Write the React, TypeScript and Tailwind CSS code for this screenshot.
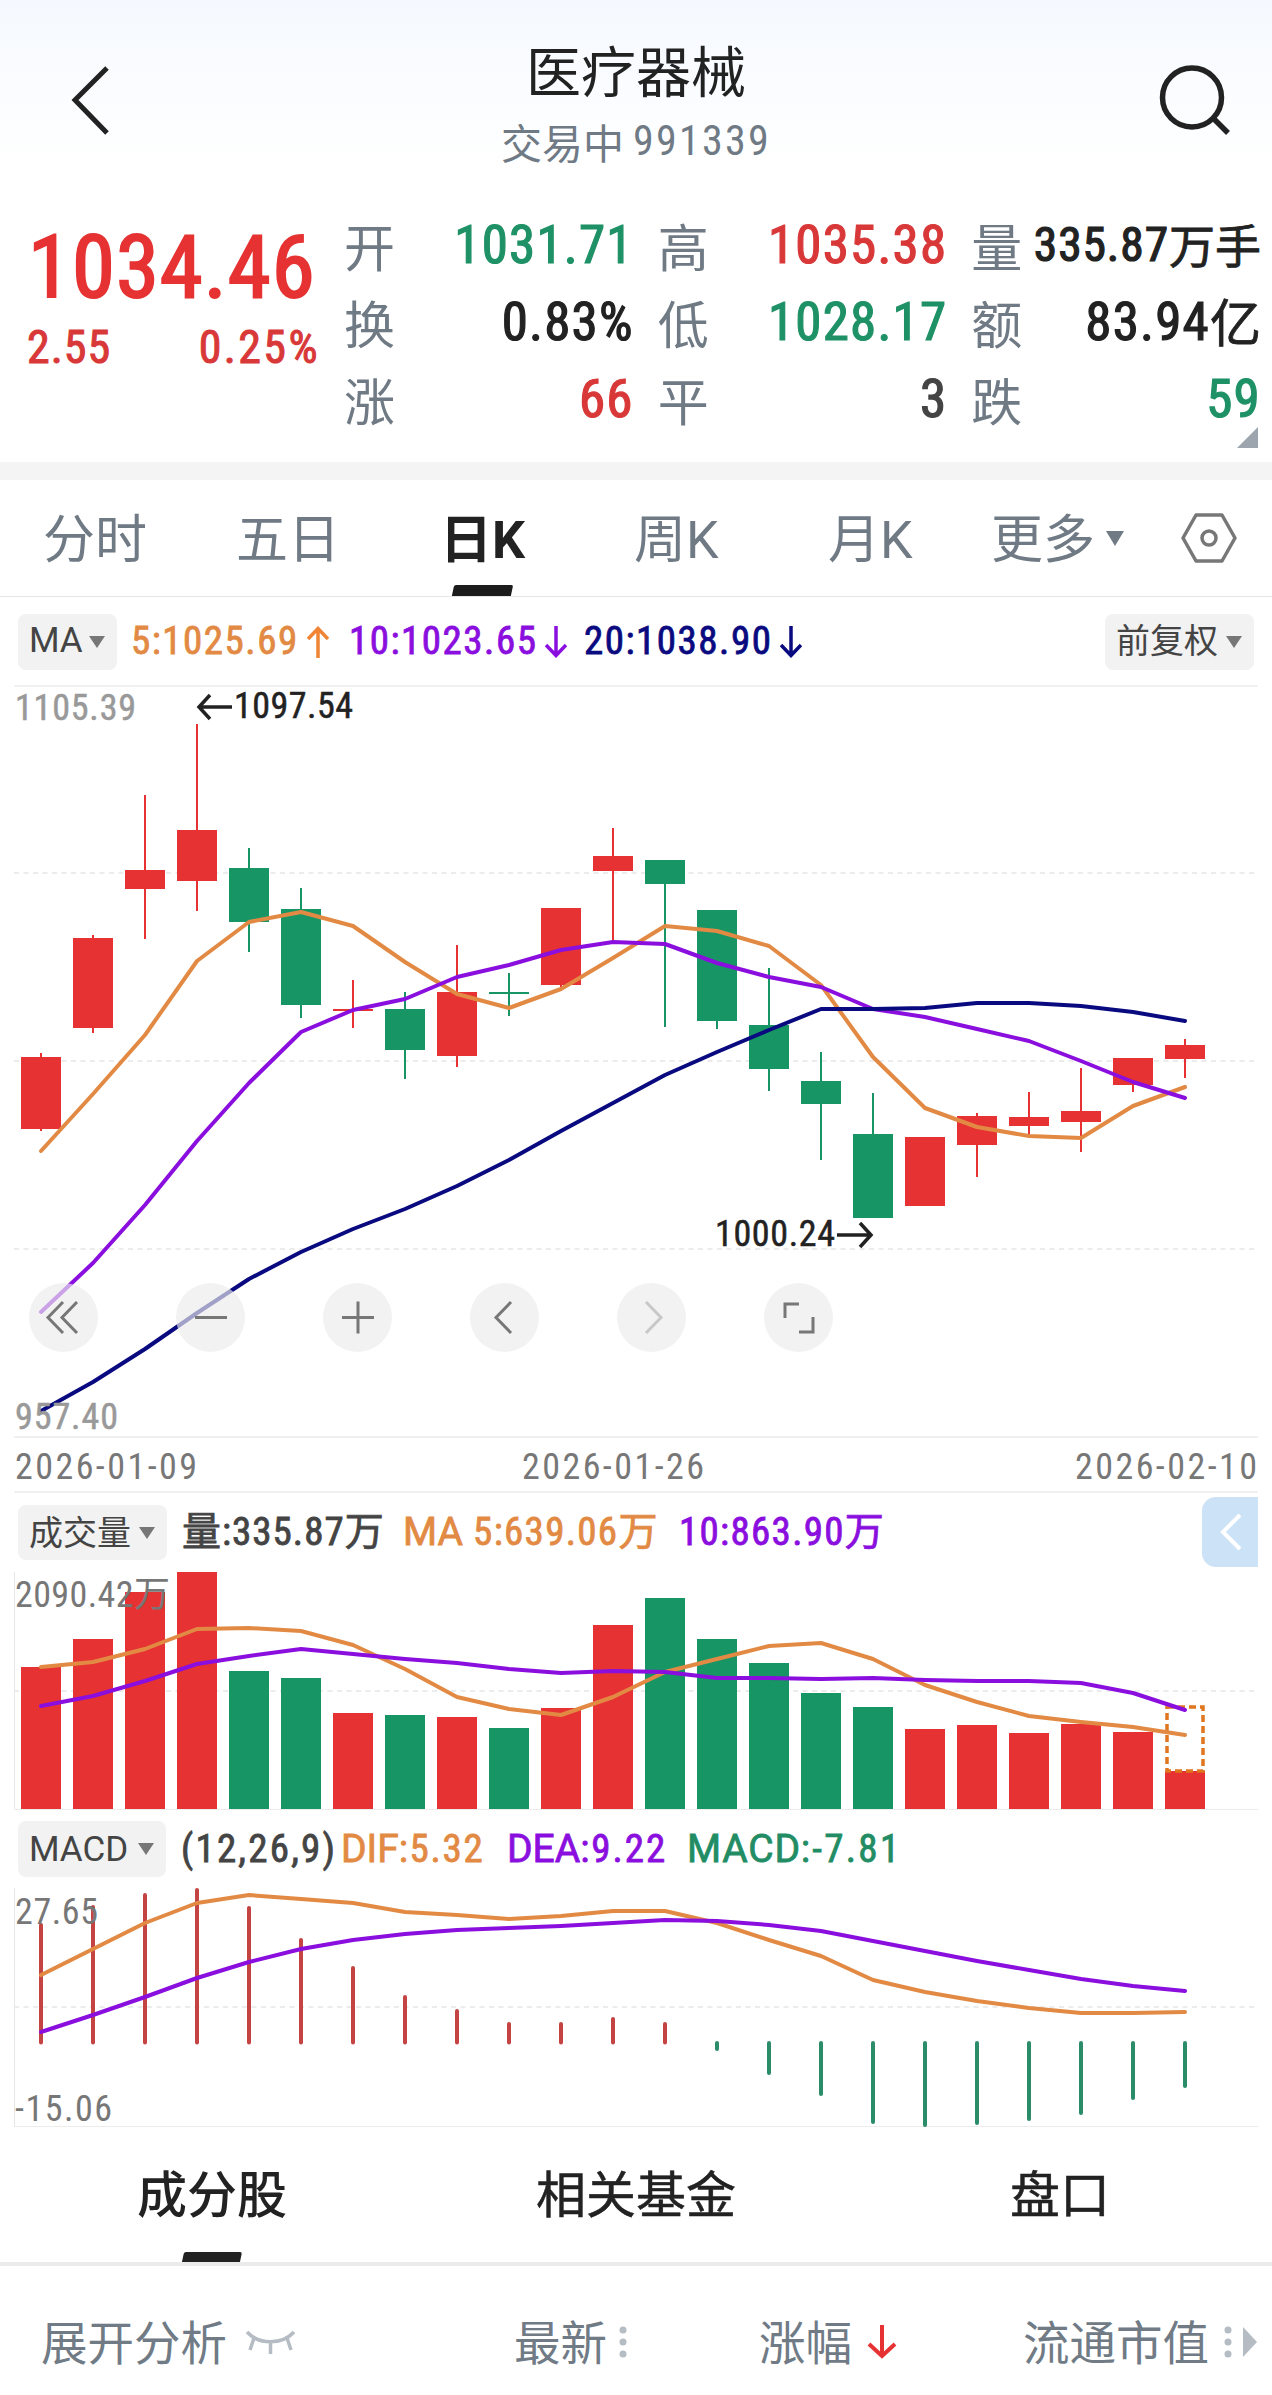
import type { ReactNode } from 'react';

type Candle = {
  up: boolean;
  high: number;
  top: number;
  bottom: number;
  low: number;
};

const RED = '#e63232';
const GREEN = '#189565';
const ORANGE = '#e28a44';
const PURPLE = '#8a0fde';
const NAVY = '#0a0a80';

const STEP = 52;
const FIRST_X = 41;

const c = (up: boolean, high: number, top: number, bottom: number, low: number): Candle => ({ up, high, top, bottom, low });

const candles: Candle[] = [
  c(true, 1053, 1057, 1129, 1131),
  c(true, 935, 938, 1028, 1033),
  c(true, 795, 870, 889, 939),
  c(true, 724, 830, 881, 911),
  c(false, 848, 868, 922, 952),
  c(false, 888, 909, 1005, 1018),
  c(true, 980, 1009, 1011, 1028),
  c(false, 992, 1009, 1050, 1079),
  c(true, 945, 992, 1056, 1067),
  c(false, 973, 992, 994, 1016),
  c(true, 908, 908, 985, 987),
  c(true, 828, 856, 871, 942),
  c(false, 860, 860, 884, 1027),
  c(false, 910, 910, 1021, 1029),
  c(false, 968, 1025, 1069, 1091),
  c(false, 1052, 1081, 1104, 1160),
  c(false, 1093, 1134, 1218, 1218),
  c(true, 1137, 1137, 1206, 1206),
  c(true, 1113, 1116, 1145, 1177),
  c(true, 1092, 1117, 1126, 1135),
  c(true, 1068, 1111, 1122, 1152),
  c(true, 1058, 1058, 1085, 1092),
  c(true, 1039, 1045, 1059, 1078),
];

const ma5 = [1151, 1094, 1035, 961, 922, 912, 926, 962, 994, 1008, 989, 958, 926, 931, 946, 985, 1057, 1108, 1127, 1136, 1138, 1106, 1087];
const ma10 = [1312, 1263, 1205, 1141, 1083, 1032, 1010, 999, 977, 965, 950, 942, 944, 963, 977, 987, 1009, 1017, 1029, 1041, 1061, 1082, 1098];
const ma20 = [1411, 1382, 1349, 1313, 1279, 1252, 1229, 1209, 1186, 1160, 1131, 1103, 1075, 1052, 1030, 1009, 1009, 1008, 1003, 1003, 1006, 1012, 1021];

const volumes = [1667, 1639, 1592, 1572, 1671, 1678, 1713, 1715, 1717, 1728, 1708, 1625, 1598, 1639, 1663, 1693, 1707, 1729, 1725, 1733, 1724, 1732, 1771];
const volMa5 = [1667, 1662, 1649, 1629, 1628, 1631, 1645, 1669, 1697, 1709, 1715, 1697, 1672, 1659, 1646, 1643, 1659, 1685, 1702, 1716, 1722, 1727, 1735];
const volMa10 = [1706, 1696, 1681, 1664, 1656, 1649, 1654, 1659, 1663, 1669, 1673, 1671, 1672, 1678, 1678, 1679, 1678, 1680, 1681, 1681, 1683, 1693, 1710];

const macd = [1923, 1905, 1893, 1888, 1906, 1938, 1966, 1995, 2009, 2022, 2022, 2017, 2022, 2051, 2075, 2096, 2124, 2127, 2125, 2121, 2115, 2100, 2088];
const dif = [1975, 1949, 1923, 1903, 1895, 1899, 1903, 1912, 1915, 1919, 1916, 1911, 1911, 1923, 1940, 1956, 1980, 1992, 2001, 2008, 2013, 2013, 2012];
const dea = [2032, 2015, 1997, 1978, 1962, 1949, 1940, 1934, 1930, 1928, 1926, 1923, 1920, 1921, 1925, 1931, 1941, 1951, 1961, 1970, 1979, 1986, 1991];

const xAt = (i: number) => FIRST_X + i * STEP;

function Line({ data, color }: { data: number[]; color: string }) {
  return (
    <polyline
      points={data.map((y, i) => `${xAt(i)},${y}`).join(' ')}
      fill="none"
      stroke={color}
      strokeWidth={4}
      strokeLinecap="round"
      strokeLinejoin="round"
    />
  );
}

function Dash({ y }: { y: number }) {
  return <line x1={14} x2={1258} y1={y} y2={y} stroke="#ececec" strokeWidth={2} strokeDasharray="5 4.5" />;
}

function Label({ x, y, w, color, children }: { x: number; y: number; w: number; color: string; children: string }) {
  return (
    <text x={x} y={y} textLength={w} fill={color} className="text-[36px] font-['Roboto_Condensed','Noto_Sans_CJK_SC',sans-serif]">
      {children}
    </text>
  );
}

function Chip({ children, className }: { children: ReactNode; className: string }) {
  return (
    <button className={`flex items-center justify-between rounded-lg bg-[#f2f2f2] pl-[11px] text-[#444] [-webkit-text-stroke:0] font-['Roboto','Noto_Sans_CJK_SC',sans-serif] ${className}`}>
      <span>{children}</span>
      <svg width="16" height="12" viewBox="0 0 16 12">
        <path d="M0 0H16L8 12Z" fill="#777" />
      </svg>
    </button>
  );
}

function Trend({ down = false, color }: { down?: boolean; color: string }) {
  return (
    <svg width="22" height="32" viewBox="0 0 22 32" fill="none" stroke={color} strokeWidth="3.5">
      {down ? <path d="M11 0V29M1 19L11 29.5L21 19" /> : <path d="M11 32V3M1 13L11 2.5L21 13" />}
    </svg>
  );
}

const quotes = [
  { label: '开', value: '1031.71', color: 'text-[#1f9166]' },
  { label: '高', value: '1035.38', color: 'text-[#d93838]' },
  { label: '量', value: '335.87', unit: '万手', color: 'text-[#222]' },
  { label: '换', value: '0.83%', color: 'text-[#222]' },
  { label: '低', value: '1028.17', color: 'text-[#1f9166]' },
  { label: '额', value: '83.94', unit: '亿', color: 'text-[#222]' },
  { label: '涨', value: '66', color: 'text-[#d93838]' },
  { label: '平', value: '3', color: 'text-[#444]' },
  { label: '跌', value: '59', color: 'text-[#1f9166]' },
];

function Header() {
  return (
    <header className="flex h-[208px] items-start justify-between bg-linear-to-b from-[#f5f9ff] to-white to-80% px-[41px]">
      <svg className="mt-[64px] ml-[27px]" width="44" height="72" viewBox="0 0 44 72" fill="none" stroke="#222" strokeWidth="5">
        <path d="M39 4L7 36L39 69" />
      </svg>
      <div className="flex flex-col items-center pl-[3px]">
        <h1 className="mt-[36px] h-[64px] text-[55px] leading-[64px] text-[#222]">医疗器械</h1>
        <p className="mt-[16px] flex h-[50px] items-center gap-[9px] text-[41px] leading-[50px] text-[#6f7a85]">
          <span>交易中</span>
          <span className="text-[42px] tracking-[2.3px] font-['Roboto_Condensed',sans-serif]">991339</span>
        </p>
      </div>
      <svg className="mt-[62px]" width="74" height="74" viewBox="0 0 74 74" fill="none" stroke="#222" strokeWidth="5.5">
        <circle cx="35" cy="35.500" r="29.500" />
        <path d="M56 56L71 71" />
      </svg>
    </header>
  );
}

function QuotePanel() {
  return (
    <section className="relative flex h-[254px] pr-[11px]">
      <div className="w-[344px] pr-[24px] pl-[27px] font-['Roboto_Condensed',sans-serif]">
        <p className="pt-[15px] pl-px text-[87px] leading-[88px] tracking-[1px] text-[#e63232] [-webkit-text-stroke:2px]">1034.46</p>
        <p className="mt-[8px] flex justify-between text-[46px] leading-[56px] text-[#d93838] [-webkit-text-stroke:1px]">
          <span className="tracking-[1px]">2.55</span>
          <span className="tracking-[2.4px]">0.25%</span>
        </p>
      </div>
      <div className="grid h-[231px] flex-1 grid-cols-3 grid-rows-3 gap-x-[24px]">
        {quotes.map((q) => (
          <div key={q.label} className="flex items-center justify-between whitespace-nowrap">
            <span className="-mt-[3px] text-[51px] leading-none text-[#6f7a85]">{q.label}</span>
            <span className={`-mt-[2px] flex items-center [-webkit-text-stroke:1.2px] ${q.color}`}>
              <span
                className={`leading-none font-['Roboto_Condensed',sans-serif] ${
                  q.unit === '万手' ? 'text-[47.5px] tracking-[0.9px]' : 'text-[53px] tracking-[1.2px]'
                }`}
              >
                {q.value}
              </span>
              {q.unit && (
                <span
                  className={`-mt-[5px] leading-none [-webkit-text-stroke:0.8px] ${q.unit === '万手' ? 'text-[46px]' : 'text-[51px]'}`}
                >
                  {q.unit}
                </span>
              )}
            </span>
          </div>
        ))}
      </div>
      <svg className="absolute right-[14px] bottom-[14px]" width="21" height="21" viewBox="0 0 21 21">
        <path d="M21 0V21H0Z" fill="#9ca5ae" />
      </svg>
    </section>
  );
}

function PeriodTabs() {
  const idle = 'flex h-full items-center pt-[6px]';
  return (
    <nav className="flex h-[117px] items-center border-b border-[#e6e6e6] text-[52px] leading-none text-[#6f7a85] font-['Roboto','Noto_Sans_CJK_SC',sans-serif]">
      <span className={`${idle} ml-[43px] w-[193px]`}>分时</span>
      <span className={`${idle} w-[204px]`}>五日</span>
      <span className="relative flex h-full w-[194px] items-center pt-[6px] font-bold text-[#222]">
        日K
        <i className="absolute bottom-0 left-[13px] h-[11px] w-[59px] -skew-x-12 rounded-t-xs bg-[#1c1c1c]" />
      </span>
      <span className={`${idle} w-[194px]`}>周K</span>
      <span className={`${idle} w-[163px]`}>月K</span>
      <span className={`${idle} gap-[11px]`}>
        更多
        <svg className="-mt-[6px]" width="18" height="15" viewBox="0 0 18 15">
          <path d="M0 0H18L9 15Z" fill="#6f7a85" />
        </svg>
      </span>
      <svg className="ml-auto mr-[35px]" width="56" height="52" viewBox="0 0 56 52" fill="none" stroke="#777" strokeWidth="3.500">
        <path d="M15 3H41L54 26L41 49H15L2 26Z" strokeLinejoin="round" />
        <circle cx="28" cy="26" r="7" />
      </svg>
    </nav>
  );
}

const legend = "flex items-center whitespace-nowrap leading-none text-[39px] [-webkit-text-stroke:0.8px] font-['Roboto_Condensed','Noto_Sans_CJK_SC',sans-serif]";

function PriceChart() {
  return (
    <section>
      <div className="flex h-[88px] items-center pt-px pr-[18px] pl-[18px]">
        <Chip className="h-[56px] w-[99px] pr-[12px] text-[35px]">MA</Chip>
        <div className={`${legend} tracking-[1.5px]`}>
          <span className="ml-[14px] flex w-[218px] items-center gap-[8px] text-[#e28a44]">
            5:1025.69 <Trend color="#f08434" />
          </span>
          <span className="flex w-[235px] items-center gap-[8px] text-[#8a0fde]">
            10:1023.65 <Trend down color={PURPLE} />
          </span>
          <span className="flex items-center gap-[8px] text-[#0a0a80]">
            20:1038.90 <Trend down color={NAVY} />
          </span>
        </div>
        <Chip className="ml-auto h-[56px] w-[149px] pr-[12px] text-[34px]">前复权</Chip>
      </div>
      <div className="relative">
        <svg className="block" width="1272" height="810" viewBox="0 685 1272 810">
          <path d="M14 686H1258M14 1437H1258M14 1492H1258" stroke="#f0f0f0" strokeWidth="2" />
          <Dash y={873} />
          <Dash y={1061} />
          <Dash y={1249} />
          {candles.map((k, i) => (
            <g key={i} fill={k.up ? RED : GREEN}>
              <rect x={xAt(i) - 1} y={k.high} width={2} height={k.low - k.high} />
              <rect x={xAt(i) - 20} y={k.top} width={40} height={k.bottom - k.top} />
            </g>
          ))}
          <Line data={ma5} color={ORANGE} />
          <Line data={ma10} color={PURPLE} />
          <Line data={ma20} color={NAVY} />
          <g stroke="#999" strokeWidth={0.5}>
            <Label x={15} y={720} w={121} color="#999">1105.39</Label>
            <Label x={15} y={1429} w={103} color="#999">957.40</Label>
          </g>
          <g stroke="#222" strokeWidth={0.5}>
            <Label x={234} y={718} w={119} color="#222">1097.54</Label>
            <Label x={715} y={1246} w={120} color="#222">1000.24</Label>
          </g>
          <path d="M232 707H199M210 695L199 707L210 719" fill="none" stroke="#222" strokeWidth="3.500" />
          <path d="M837 1235H871M860 1223L871 1235L860 1247" fill="none" stroke="#222" strokeWidth="3.500" />
          <Label x={15} y={1479} w={182} color="#777">2026-01-09</Label>
          <Label x={522} y={1479} w={182} color="#777">2026-01-26</Label>
          <Label x={1075} y={1479} w={182} color="#777">2026-02-10</Label>
        </svg>
        <div className="absolute top-[598px] left-[28.5px] flex gap-[78px]">
          {[
            'M34 19L19 34.5L34 50M48 19L33 34.5L48 50',
            'M19 34.5H51',
            'M19 34.5H51M35 18.500V50.500',
            'M41 19L26 34.5L41 50',
            'M29 19L44 34.5L29 50',
            'M21 35V21H35M49 34V49H35',
          ].map((d, i) => (
            <button key={d} className="size-[69px] rounded-full bg-[#ececec]/67">
              <svg width="69" height="69" viewBox="0 0 69 69" fill="none" stroke={i === 4 ? '#c8c8c8' : '#777'} strokeWidth="3">
                <path d={d} />
              </svg>
            </button>
          ))}
        </div>
      </div>
    </section>
  );
}

function VolumeChart() {
  return (
    <section>
      <div className="flex h-[77px] items-start justify-between pr-[14px] pl-[18px]">
        <div className={`${legend} pt-[10px]`}>
          <Chip className="h-[55px] w-[149px] pr-[12px] text-[34px] font-normal">成交量</Chip>
          <span className="ml-[15px] w-[221px] tracking-[1px] text-[#444]">量:335.87万</span>
          <span className="w-[276px] tracking-[1.3px] text-[#e28a44]">
            <span className="font-['Roboto',sans-serif] tracking-normal">MA</span> 5:639.06万
          </span>
          <span className="tracking-[1.3px] text-[#8a0fde]">10:863.90万</span>
        </div>
        <button className="mt-[2px] h-[70px] w-[56px] rounded-l-[14px] bg-[#cce2f6]">
          <svg width="56" height="70" viewBox="0 0 56 70" fill="none" stroke="#fff" strokeWidth="4">
            <path d="M38 18L21 35L38 52" />
          </svg>
        </button>
      </div>
      <svg className="block" width="1272" height="240" viewBox="0 1572 1272 240">
        <path d="M14.500 1572V1810" stroke="#e6e6e6" />
        <path d="M14 1809.500H1258" stroke="#ececec" />
        <Dash y={1691} />
        {volumes.map((y, i) => (
          <rect key={i} x={xAt(i) - 20} y={y} width={40} height={1809 - y} fill={candles[i].up ? RED : GREEN} />
        ))}
        <rect x={1167} y={1707} width={36} height={64} fill="none" stroke="#e0761e" strokeWidth={3.5} strokeDasharray="7 4" />
        <Line data={volMa5} color={ORANGE} />
        <Line data={volMa10} color={PURPLE} />
        <Label x={15} y={1607} w={155} color="#777">2090.42万</Label>
      </svg>
    </section>
  );
}

function MacdChart() {
  return (
    <section>
      <div className={`${legend} h-[76px] items-start pt-[9px] pl-[18px]`}>
        <Chip className="h-[56px] w-[148px] pr-[12px] text-[35px] font-normal">MACD</Chip>
        <div className="flex h-[56px] items-center pt-px">
          <span className="ml-[15px] w-[160px] tracking-[2.2px] text-[#444]">(12,26,9)</span>
          <span className="w-[166px] tracking-[1.7px] text-[#e28a44]">
            <span className="font-['Roboto',sans-serif] tracking-normal">DIF</span>:5.32
          </span>
          <span className="w-[180px] tracking-[2px] text-[#8a0fde]">
            <span className="font-['Roboto',sans-serif] tracking-normal">DEA</span>:9.22
          </span>
          <span className="tracking-[2.3px] text-[#228c64]">
            <span className="font-['Roboto',sans-serif] tracking-[0.8px]">MACD</span>:-7.81
          </span>
        </div>
      </div>
      <svg className="block" width="1272" height="242" viewBox="0 1888 1272 242">
        <path d="M14.500 1888V2126" stroke="#e6e6e6" />
        <path d="M14 2126.500H1258" stroke="#ececec" />
        <Dash y={2007} />
        {macd.map((y, i) => {
          const up = y < 2042;
          return (
            <rect key={i} x={xAt(i) - 2} y={up ? y : 2041} width={4} height={up ? 2044.5 - y : y - 2041} rx={2} fill={up ? '#c44444' : '#2a8c68'} />
          );
        })}
        <Line data={dif} color={ORANGE} />
        <Line data={dea} color={PURPLE} />
        <Label x={15} y={1924} w={83} color="#777">27.65</Label>
        <Label x={15} y={2121} w={97} color="#777">-15.06</Label>
      </svg>
    </section>
  );
}

function Dots() {
  return (
    <svg width="8" height="34" viewBox="0 0 8 34" fill="#b5bcc4">
      <circle cx="4" cy="5" r="3.500" />
      <circle cx="4" cy="17" r="3.500" />
      <circle cx="4" cy="29" r="3.500" />
    </svg>
  );
}

function Constituents() {
  return (
    <section>
      <nav className="grid h-[136px] grid-cols-3 border-b-4 border-[#ebebeb] text-center text-[50px] leading-[123px] text-[#222]">
        <span className="relative font-medium">
          成分股
          <i className="absolute bottom-0 left-[183px] h-[10px] w-[58px] -skew-x-12 rounded-t-xs bg-[#222]" />
        </span>
        <span className="[-webkit-text-stroke:0.5px]">相关基金</span>
        <span className="[-webkit-text-stroke:0.5px]">盘口</span>
      </nav>
      <div className="flex h-[129px] items-center pt-[22px] pl-[41px] text-[46.5px] leading-none text-[#707b86]">
        <span className="flex w-[473px] items-center gap-[18px]">
          <span className="-mt-[2px]">展开分析</span>
          <svg width="51" height="26" viewBox="0 0 51 26" fill="none" stroke="#b5bcc4" strokeWidth="3.500">
            <path d="M2 3C14 16 37 16 49 3M9 9L5 21M25.500 13V25M42 9L46 21" />
          </svg>
        </span>
        <span className="flex w-[245px] items-center gap-[12px]">
          <span className="-mt-[2px]">最新</span>
          <Dots />
        </span>
        <span className="flex w-[264px] items-center gap-[15px]">
          <span className="-mt-[2px]">涨幅</span>
          <svg width="30" height="34" viewBox="0 0 30 34" fill="none" stroke={RED} strokeWidth="4">
            <path d="M15 0V30M2 19L15 31L28 19" />
          </svg>
        </span>
        <span className="flex items-center gap-[15px]">
          <span className="-mt-[2px]">流通市值</span>
          <span className="flex items-center gap-[11px]">
            <Dots />
            <svg width="14" height="30" viewBox="0 0 14 30">
              <path d="M0 0L14 15L0 30Z" fill="#b5bcc4" />
            </svg>
          </span>
        </span>
      </div>
    </section>
  );
}

export default function App() {
  return (
    <main className="h-[2395px] w-[1272px] overflow-hidden bg-white font-['Noto_Sans_CJK_SC',sans-serif]">
      <Header />
      <QuotePanel />
      <div className="h-[18px] bg-[#f4f4f4]" />
      <PeriodTabs />
      <PriceChart />
      <VolumeChart />
      <MacdChart />
      <Constituents />
    </main>
  );
}
